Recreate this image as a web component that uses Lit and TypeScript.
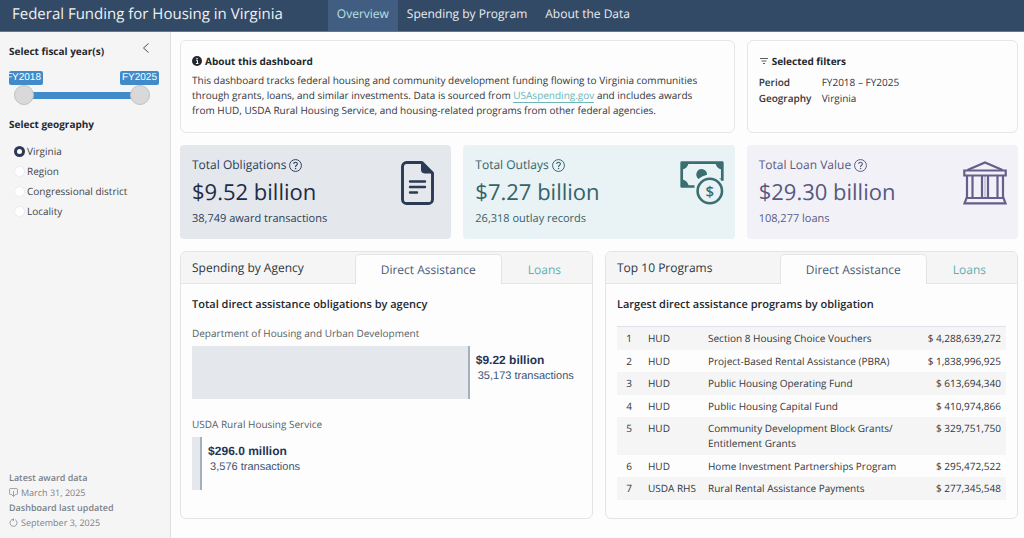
import { LitElement, html, css, svg } from "lit";
import { customElement, property, state } from "lit/decorators.js";
import { classMap } from "lit/directives/class-map.js";

const fileIcon = svg`
  <svg viewBox="0 0 44 44" width="44" height="44" fill="none" stroke="currentColor" aria-hidden="true">
    <path d="M10.5 1.5h15.5l10.500 10.500v26.500a4 4 0 0 1-4 4H10.500a4 4 0 0 1-4-4v-33a4 4 0 0 1 4-4z" stroke-width="2.900" stroke-linejoin="round"/>
    <path d="M25.500 1.500v7.500a3 3 0 0 0 3 3h8z" fill="currentColor" stroke="currentColor"/>
    <path d="M14 20.500h15M14 26h15M14 31.500h7" stroke-width="2.400" stroke-linecap="round"/>
  </svg>`;

const cashIcon = svg`
  <svg viewBox="0 0 44 44" width="44" height="44" fill="none" stroke="currentColor" aria-hidden="true">
    <path d="M14.500 25.500H1.700V1.700h40.600v18" stroke-width="2.700" stroke-linejoin="round"/>
    <path d="M1.500 1.500h7a7 7 0 0 1-7 7zM42.500 1.500h-7a7 7 0 0 0 7 7zM1.500 25.500h7a7 7 0 0 0-7-7zM42.500 19.500v-2l-3.500 0z" fill="currentColor" stroke="none"/>
    <path d="M16.300 14.500a5.400 5.400 0 1 1 10.700-.8q-5.500 1.200-8.500 4.300-1.700-1.300-2.200-3.500z" fill="currentColor" stroke="none"/>
    <circle cx="29.800" cy="30" r="12.200" stroke-width="2.600"/>
    <text class="coin" x="29.800" y="35.500" text-anchor="middle" fill="currentColor" stroke="none">$</text>
  </svg>`;

const bankIcon = svg`
  <svg viewBox="0 0 44 44" width="44" height="44" fill="none" stroke="currentColor" stroke-width="2.200" aria-hidden="true">
    <path d="M4.500 9 22 1.500 39.500 9"/>
    <path d="M1.300 9.500h41.400v5H1.300z"/>
    <path d="M4 14.500v22M9.500 14.500v22M19 14.500v22M25 14.500v22M34.500 14.500v22M40 14.500v22"/>
    <path d="M22 14.500v22" stroke-width="1" opacity=".5"/>
    <path d="M3.500 37h37l2 5.300h-41z"/>
  </svg>`;

const infoIcon = svg`
  <svg viewBox="0 0 16 16" width="10" height="10" aria-hidden="true">
    <circle cx="8" cy="8" r="8" fill="currentColor"/>
    <path d="M6.500 6.800h2.200v5M6.300 12h4" stroke="#fff" stroke-width="1.600" fill="none"/>
    <circle cx="8" cy="4" r="1.200" fill="#fff"/>
  </svg>`;

const filterIcon = svg`
  <svg viewBox="0 0 10 10" width="10" height="10" fill="none" stroke="#5a5e63" aria-hidden="true">
    <path d="M1 2.500h8M2.500 5h5M4 7.500h2"/>
  </svg>`;

const helpIcon = svg`
  <svg viewBox="0 0 16 16" width="13" height="13" fill="none" stroke="currentColor" stroke-width="1.200" aria-hidden="true">
    <circle cx="8" cy="8" r="7.300"/>
    <path d="M5.800 6.200c0-2.900 4.500-2.900 4.500-.2 0 1.500-2.200 1.800-2.200 3.500v.4" stroke-width="1.400"/>
    <circle cx="8.100" cy="11.800" r=".9" fill="currentColor" stroke="none"/>
  </svg>`;

const awardIcon = svg`
  <svg viewBox="0 0 16 16" width="9" height="9" fill="none" stroke="currentColor" stroke-width="1.300" aria-hidden="true">
    <path d="M5 11.500H2.500a1.500 1.500 0 0 1-1.500-1.500V2.500A1.500 1.500 0 0 1 2.500 1h11A1.500 1.500 0 0 1 15 2.500V10a1.500 1.500 0 0 1-1.500 1.500H11M8 5v10M5 12l3 3 3-3"/>
  </svg>`;

const refreshIcon = svg`
  <svg viewBox="0 0 16 16" width="9" height="9" fill="none" stroke="currentColor" stroke-width="1.300" aria-hidden="true">
    <path d="M11 3a6.300 6.300 0 1 1-6 0"/>
    <path d="M8.500.5 5 3l3.500 2.500z" fill="currentColor" stroke="none"/>
  </svg>`;

interface Kpi {
  label: string;
  value: string;
  note: string;
  tone: string;
  icon: unknown;
}

const KPIS: Kpi[] = [
  { label: "Total Obligations", value: "$9.52 billion", note: "38,749 award transactions", tone: "navy", icon: fileIcon },
  { label: "Total Outlays", value: "$7.27 billion", note: "26,318 outlay records", tone: "teal", icon: cashIcon },
  { label: "Total Loan Value", value: "$29.30 billion", note: "108,277 loans", tone: "violet", icon: bankIcon },
];

const AGENCIES = [
  { name: "Department of Housing and Urban Development", share: 71.4, amount: "$9.22 billion", count: "35,173 transactions" },
  { name: "USDA Rural Housing Service", share: 2.6, amount: "$296.0 million", count: "3,576 transactions" },
];

const PROGRAMS = [
  ["HUD", "Section 8 Housing Choice Vouchers", "4,288,639,272"],
  ["HUD", "Project-Based Rental Assistance (PBRA)", "1,838,996,925"],
  ["HUD", "Public Housing Operating Fund", "613,694,340"],
  ["HUD", "Public Housing Capital Fund", "410,974,866"],
  ["HUD", "Community Development Block Grants/ Entitlement Grants", "329,751,750"],
  ["HUD", "Home Investment Partnerships Program", "295,472,522"],
  ["USDA RHS", "Rural Rental Assistance Payments", "277,345,548"],
];

const PAGES = ["Overview", "Spending by Program", "About the Data"];
const GEOGRAPHIES = ["Virginia", "Region", "Congressional district", "Locality"];

@customElement("kpi-card")
export class KpiCard extends LitElement {
  @property({ attribute: false }) kpi!: Kpi;

  static styles = css`
    :host { display: block; }
    .card {
      display: flex;
      justify-content: space-between;
      align-items: flex-start;
      box-sizing: border-box;
      height: 100%;
      padding: 12px 11px 13px 12px;
      border-radius: 4px;
    }
    .navy { background: #e4e7ec; color: #2b3a55; }
    .teal { background: #e9f2f4; color: #3b6e70; }
    .violet { background: #f2f1f8; color: #655f8b; }
    .label { display: flex; align-items: center; gap: 3px; font-size: 12px; line-height: 16px; }
    .help { display: flex; padding: 0; border: 0; background: none; color: inherit; }
    .value { margin: 6px 0; font-size: 22px; line-height: 26px; }
    .note { font-size: 11px; line-height: 15px; }
    .text { color: #2b3d58; }
    .navy .value { color: #1b2c47; }
    .teal .text { color: #35636a; }
    .violet .text { color: #58597f; }
    .icon { display: flex; padding-top: 4px; }
    .coin { font: 600 15px "Open Sans", sans-serif; }
  `;

  render() {
    const { label, value, note, tone, icon } = this.kpi;
    return html`
      <section class="card ${tone}">
        <div class="text">
          <div class="label">${label}<button class="help" aria-label="About ${label}">${helpIcon}</button></div>
          <div class="value">${value}</div>
          <div class="note">${note}</div>
        </div>
        <div class="icon">${icon}</div>
      </section>`;
  }
}

@customElement("tab-card")
export class TabCard extends LitElement {
  @property() heading = "";
  @state() private active = "Direct Assistance";

  static styles = css`
    :host {
      display: block;
      border: 1px solid #e3e4e8;
      border-radius: 6px;
      overflow: hidden;
    }
    .head {
      display: flex;
      justify-content: space-between;
      padding: 2px 5px 0 11px;
      background: #f5f5f5;
      border-bottom: 1px solid #e3e4ec;
    }
    .title { margin: 0; font-size: 12px; font-weight: 400; line-height: 28px; color: #2f343a; }
    .tabs { display: flex; margin-bottom: -1px; }
    .tab {
      padding: 0 25px;
      border: 1px solid transparent;
      border-bottom: 0;
      border-radius: 5px 5px 0 0;
      background: none;
      color: #5faeb2;
      font: inherit;
      font-size: 12px;
      line-height: 29px;
      text-rendering: inherit;
    }
    .on { background: #fdfdfd; border-color: #e3e4e8; color: #465a74; }
    .body { padding: 9px 11px 10px; }
  `;

  render() {
    return html`
      <div class="head">
        <h2 class="title">${this.heading}</h2>
        <div class="tabs" role="tablist">
          ${["Direct Assistance", "Loans"].map((t) => html`
            <button role="tab" aria-selected=${t === this.active}
              class=${classMap({ tab: true, on: t === this.active })}
              @click=${() => (this.active = t)}>${t}</button>`)}
        </div>
      </div>
      <div class="body"><slot></slot></div>`;
  }
}

@customElement("app-root")
export class AppRoot extends LitElement {
  @state() private page = "Overview";
  @state() private geography = "Virginia";
  @state() private from = 2018;
  @state() private to = 2025;

  static styles = css`
    :host {
      display: flex;
      flex-direction: column;
      min-height: 100vh;
      background: #fdfdfd;
      color: #33373c;
      font-family: "Open Sans", sans-serif;
      font-size: 10px;
      line-height: 15px;
      text-rendering: geometricPrecision;
    }
    .bar {
      display: flex;
      align-items: stretch;
      background: #334a66;
      border-bottom: 1px solid #5f7694;
      padding-left: 12px;
    }
    .brand { margin: 0; padding-right: 45px; font-size: 15px; font-weight: 400; line-height: 28px; color: #eef1f4; }
    .nav { display: flex; }
    .page { padding: 0 9px 3px; font-size: 12px; line-height: 28px; color: #e9edf1; text-decoration: none; }
    .current { background: #415d82; color: #b8e2e0; }

    .layout { display: grid; grid-template-columns: 171px minmax(0, 1fr); flex: 1; }
    .side {
      display: flex;
      flex-direction: column;
      padding: 11px 11px 8px 9px;
      background: #f5f5f5;
      border-right: 1px solid #e0e0e2;
    }
    .row { display: flex; justify-content: space-between; align-items: flex-start; }
    .label { margin: 0; padding: 0; font-size: 10px; font-weight: 700; line-height: 16px; color: #24282d; }
    .collapse { display: flex; padding: 0 9px 0 0; border: 0; background: none; color: #4a4e54; }

    .bubbles { display: flex; justify-content: space-between; margin-top: 12px; }
    .bubble {
      display: flex;
      justify-content: flex-end;
      padding: 0 2px;
      border-radius: 2px;
      background: #428bca;
      color: #fff;
      font: 10px/14px "Liberation Sans", sans-serif;
    }
    .low { width: 32px; padding-left: 0; overflow: hidden; }
    .range { display: grid; align-items: center; margin: 0 9px 0 5px; }
    .rail { grid-area: 1 / 1; height: 7px; margin: 0 10px; background: #428bca; }
    .knob {
      grid-area: 1 / 1;
      appearance: none;
      width: 100%;
      height: 20px;
      margin: 0;
      background: none;
      pointer-events: none;
    }
    .knob::-webkit-slider-thumb {
      appearance: none;
      box-sizing: border-box;
      width: 20px;
      height: 20px;
      border: 1px solid #c2c2c2;
      border-radius: 50%;
      background: #d9d9d9;
      pointer-events: auto;
    }

    .group { margin: 11px 0 0; padding: 0; border: 0; }
    .choices { display: grid; gap: 4px; margin-top: 11px; padding-left: 5px; }
    .choice { display: flex; align-items: center; gap: 2px; line-height: 16px; color: #3f444a; }
    .radio {
      appearance: none;
      box-sizing: border-box;
      width: 11px;
      height: 11px;
      margin: 0;
      border: 1px solid #ececec;
      border-radius: 50%;
      background: #fff;
    }
    .radio:checked { border: 3px solid #2b3a55; }
    .meta { margin-top: auto; font-size: 9px; color: #7b8289; }
    .strong { font-weight: 600; }
    .date { display: flex; align-items: center; gap: 3px; }

    .main {
      display: grid;
      grid-template-columns: repeat(6, minmax(0, 1fr));
      gap: 12px;
      align-content: start;
      padding: 8px 6px 16px 9px;
    }
    .box { box-sizing: border-box; padding: 12px 11px 14px; border: 1px solid #e6e6e9; border-radius: 6px; }
    .about { grid-column: span 4; }
    .filters { grid-column: span 2; }
    .kpi { grid-column: span 2; }
    .half { grid-column: span 3; }
    .h { display: flex; align-items: center; gap: 3px; margin: 0 0 4px; font-size: 10px; font-weight: 700; line-height: 16px; color: #24282d; }
    .p { margin: 0; padding-right: 12px; }
    .link { color: #6cb5b8; text-decoration: none; border-bottom: 1px solid #6cb5b8; }
    .terms { display: grid; grid-template-columns: 63px 1fr; row-gap: 1px; margin: 6px 0 0; }
    .term { font-weight: 600; }
    .def { margin: 0; }

    .sub { margin: 4px 0 13px; font-size: 11px; font-weight: 600; line-height: 16px; color: #24282d; }
    .agency { margin-bottom: 18px; }
    .name { margin-bottom: 5px; color: #5a5d61; }
    .track { display: flex; gap: 6px; font-family: "Liberation Sans", sans-serif; color: #3d5374; }
    .fill { box-sizing: border-box; flex-shrink: 0; height: 53px; background: #e4e8ec; border-right: 2px solid #a3b0bd; }
    .amount { padding-top: 6px; font-size: 12px; font-weight: 700; line-height: 16px; color: #1f3557; }
    .count { padding-left: 2px; font-size: 11px; line-height: 16px; white-space: nowrap; }

    .table { width: 100%; border-collapse: collapse; border-top: 1px solid #e0e1ea; }
    .cell { padding: 4px 5px 3px; vertical-align: top; text-align: left; font-weight: 400; }
    .line:nth-child(odd) { background: #f5f5f5; }
    .line:nth-child(odd) .cell { padding-bottom: 4px; }
    .rank { min-width: 10px; text-align: right; }
    .org { min-width: 50px; padding-left: 11px; white-space: nowrap; }
    .prog { width: 100%; }
    .sum { text-align: right; white-space: nowrap; }
  `;

  render() {
    return html`
      <header class="bar">
        <h1 class="brand">Federal Funding for Housing in Virginia</h1>
        <nav class="nav">
          ${PAGES.map((p) => html`
            <a href="#" class=${classMap({ page: true, current: p === this.page })}
              @click=${() => (this.page = p)}>${p}</a>`)}
        </nav>
      </header>
      <div class="layout">
        <aside class="side">
          <div class="row">
            <h2 class="label">Select fiscal year(s)</h2>
            <button class="collapse" aria-label="Collapse sidebar">
              <svg viewBox="0 0 8 10" width="8" height="10" fill="none" stroke="currentColor"><path d="M6.500.5 1.500 5l5 4.500"/></svg>
            </button>
          </div>
          <div class="bubbles">
            <output class="bubble low">FY${this.from}</output>
            <output class="bubble">FY${this.to}</output>
          </div>
          <div class="range">
            <div class="rail"></div>
            <input class="knob" type="range" min="2018" max="2025" aria-label="First fiscal year" .value=${String(this.from)}
              @input=${(e: Event) => (this.from = +(e.target as HTMLInputElement).value)} />
            <input class="knob" type="range" min="2018" max="2025" aria-label="Last fiscal year" .value=${String(this.to)}
              @input=${(e: Event) => (this.to = +(e.target as HTMLInputElement).value)} />
          </div>
          <fieldset class="group">
            <legend class="label">Select geography</legend>
            <div class="choices">
              ${GEOGRAPHIES.map((g) => html`
                <label class="choice"><input class="radio" type="radio" name="geo" .checked=${g === this.geography}
                  @change=${() => (this.geography = g)} />${g}</label>`)}
            </div>
          </fieldset>
          <div class="meta">
            <div class="strong">Latest award data</div>
            <div class="date">${awardIcon}March 31, 2025</div>
            <div class="strong">Dashboard last updated</div>
            <div class="date">${refreshIcon}September 3, 2025</div>
          </div>
        </aside>
        <main class="main">
          <section class="box about">
            <h2 class="h">${infoIcon}About this dashboard</h2>
            <p class="p">This dashboard tracks federal housing and community development funding flowing to Virginia
              communities through grants, loans, and similar investments. Data is sourced from
              <a class="link" href="#">USAspending.gov</a> and includes awards from HUD, USDA Rural Housing Service, and
              housing-related programs from other federal agencies.</p>
          </section>
          <section class="box filters">
            <h2 class="h">${filterIcon}Selected filters</h2>
            <dl class="terms">
              <dt class="term">Period</dt><dd class="def">FY${this.from} – FY${this.to}</dd>
              <dt class="term">Geography</dt><dd class="def">${this.geography}</dd>
            </dl>
          </section>
          ${KPIS.map((k) => html`<kpi-card class="kpi" .kpi=${k}></kpi-card>`)}
          <tab-card class="half" heading="Spending by Agency">
            <h3 class="sub">Total direct assistance obligations by agency</h3>
            ${AGENCIES.map((a) => html`
              <div class="agency">
                <div class="name">${a.name}</div>
                <div class="track">
                  <div class="fill" style="width:${a.share}%"></div>
                  <div>
                    <div class="amount">${a.amount}</div>
                    <div class="count">${a.count}</div>
                  </div>
                </div>
              </div>`)}
          </tab-card>
          <tab-card class="half" heading="Top 10 Programs">
            <h3 class="sub">Largest direct assistance programs by obligation</h3>
            <table class="table">
              <tbody>
                ${PROGRAMS.map(([org, name, sum], i) => html`
                  <tr class="line">
                    <td class="cell rank">${i + 1}</td>
                    <td class="cell org">${org}</td>
                    <th class="cell prog" scope="row">${name}</th>
                    <td class="cell sum">$ ${sum}</td>
                  </tr>`)}
              </tbody>
            </table>
          </tab-card>
        </main>
      </div>`;
  }
}
